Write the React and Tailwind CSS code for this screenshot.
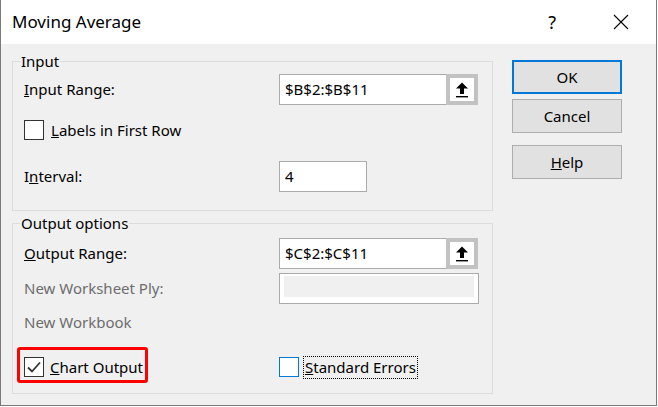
import React from "react";

function RefBtn() {
  return (
    <div className="w-[32px] h-full border-[4px] border-[#c2c2c2] bg-white flex items-center justify-center">
      <svg width="14" height="16" viewBox="0 0 14 16">
        <path d="M7 0.5 L13 6.5 H9 V12 H5 V6.5 H1 Z" fill="#000" />
        <rect x="1" y="14" width="12" height="1.4" fill="#000" />
      </svg>
    </div>
  );
}

function RangeField({ value }) {
  return (
    <div className="flex w-[199px] h-[31px]">
      <div className="flex-1 border-y border-l border-[#ababab] bg-white pl-[5px] flex items-center text-[15px] text-black">
        {value}
      </div>
      <RefBtn />
    </div>
  );
}

function Checkbox({ checked, blue }) {
  return (
    <div
      className={
        "w-[20px] h-[20px] bg-white border flex items-center justify-center " +
        (blue ? "border-[#0078d7]" : "border-[#333333]")
      }
    >
      {checked && (
        <svg width="16" height="14" viewBox="0 0 16 14">
          <path d="M2 7.5 L6 11.5 L14 2.5" fill="none" stroke="#333" strokeWidth="1.8" />
        </svg>
      )}
    </div>
  );
}

function Btn({ children, primary, className = "" }) {
  return (
    <div
      className={
        "w-[110px] h-[34px] bg-[#e1e1e1] flex items-center justify-center text-[15px] text-black " +
        (primary ? "border-2 border-[#0078d7] " : "border border-[#adadad] ") +
        className
      }
    >
      {children}
    </div>
  );
}

export default function App() {
  return (
    <div className="w-[658px] h-[407px] bg-white font-['Noto_Sans','Open_Sans',sans-serif] overflow-hidden">
      <div className="w-[657px] h-[406px] border-l border-r border-b border-[#7a7a7a] bg-[#f0f0f0] flex flex-col">
        {/* Title bar */}
        <div className="h-[44px] bg-white flex items-center shrink-0">
          <div className="pl-[11px] text-[17px] text-black">Moving Average</div>
          <div className="ml-auto text-[18px] text-black mr-[57px] leading-none">?</div>
          <svg width="16" height="16" viewBox="0 0 16 16" className="mr-[27px]">
            <path d="M1 1 L15 15 M15 1 L1 15" stroke="#000" strokeWidth="1.1" />
          </svg>
        </div>

        {/* Body */}
        <div className="flex pl-[11px]">
          <div className="w-[481px] flex flex-col">
            <fieldset className="mt-[7px] border border-[#dcdcdc] px-[11px] pt-[3px] pb-[18px]">
              <legend className="ml-[-4px] px-[1px] text-[15px] leading-[20px] text-black">Input</legend>
              <div className="flex items-center h-[31px]">
                <div className="w-[255px] text-[15px] text-black">
                  <u>I</u>nput Range:
                </div>
                <RangeField value="$B$2:$B$11" />
              </div>
              <div className="flex items-center h-[20px] mt-[15px]">
                <Checkbox />
                <div className="ml-[7px] text-[15px] text-black">
                  <u>L</u>abels in First Row
                </div>
              </div>
              <div className="flex items-center h-[31px] mt-[21px]">
                <div className="w-[255px] text-[15px] text-black">
                  I<u>n</u>terval:
                </div>
                <div className="w-[88px] h-[31px] border border-[#ababab] bg-white pl-[5px] flex items-center text-[15px] text-black">
                  4
                </div>
              </div>
            </fieldset>

            <fieldset className="mt-[2px] border border-[#dcdcdc] px-[11px] pt-[5px] pb-[16px]">
              <legend className="ml-[-4px] px-[1px] text-[15px] leading-[20px] text-black">Output options</legend>
              <div className="flex items-center h-[31px]">
                <div className="w-[255px] text-[15px] text-black">
                  <u>O</u>utput Range:
                </div>
                <RangeField value="$C$2:$C$11" />
              </div>
              <div className="flex items-center h-[31px] mt-[4px]">
                <div className="w-[255px] text-[15px] text-[#6d6d6d]">New Worksheet Ply:</div>
                <div className="w-[200px] h-[31px] border border-[#ababab] bg-white pt-[2px] px-[4px] pb-[6px] flex">
                  <div className="flex-1 bg-[#f0f0f0]"></div>
                </div>
              </div>
              <div className="flex items-center h-[20px] mt-[8px]">
                <div className="text-[15px] text-[#6d6d6d]">New Workbook</div>
              </div>
              <div className="flex items-center h-[20px] mt-[25px]">
                <div className="relative w-[255px] flex items-center">
                  <div className="absolute left-[-7px] top-[-9px] w-[131px] h-[36px] border-[3px] border-[#ff0000] rounded-[3px]"></div>
                  <Checkbox checked />
                  <div className="ml-[6px] text-[15px] text-black">
                    <u>C</u>hart Output
                  </div>
                </div>
                <Checkbox blue />
                <div className="ml-[4px] border border-dotted border-black px-[1px] h-[23px] flex items-center text-[15px] text-black">
                  <u>S</u>tandard Errors
                </div>
              </div>
            </fieldset>
          </div>

          <div className="ml-[19px] flex flex-col">
            <Btn primary className="mt-[16px]">OK</Btn>
            <Btn className="mt-[5px]">Cancel</Btn>
            <Btn className="mt-[12px]">
              <span>
                <u>H</u>elp
              </span>
            </Btn>
          </div>
        </div>
      </div>
    </div>
  );
}
